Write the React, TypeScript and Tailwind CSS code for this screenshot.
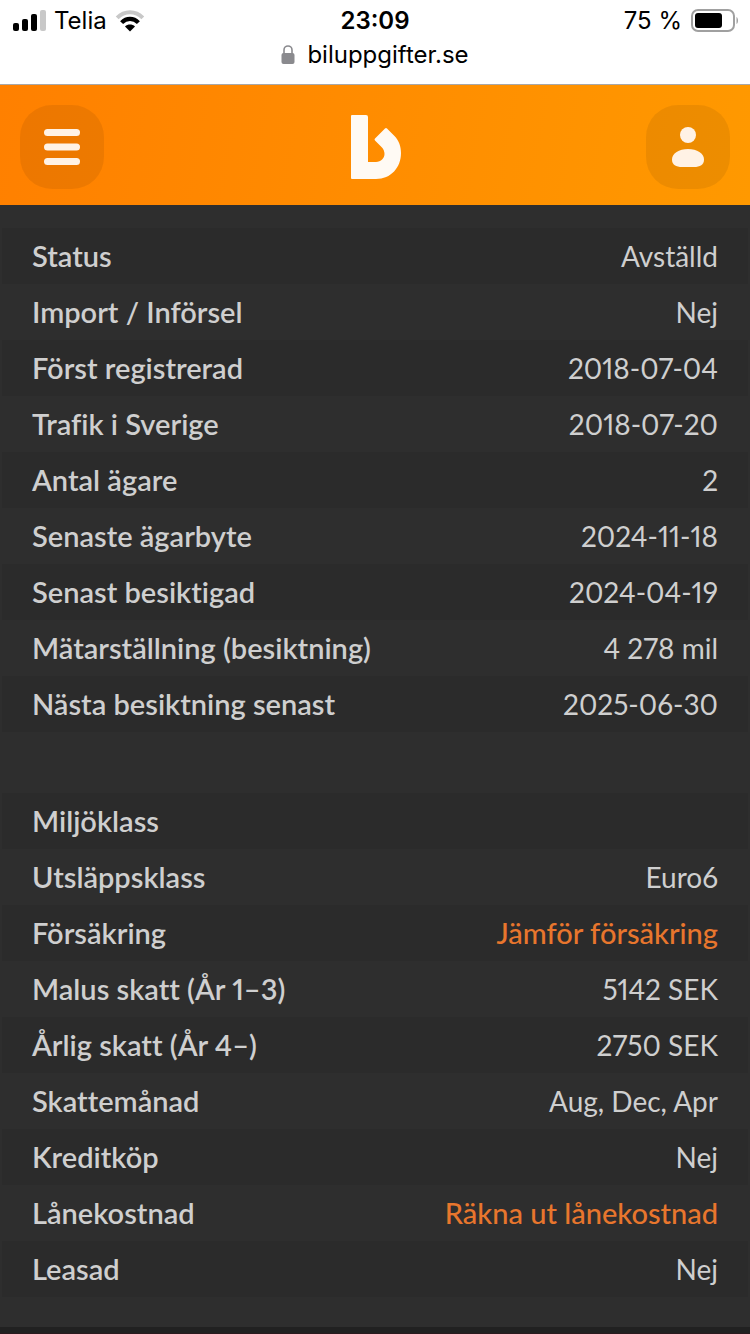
type Entry = {
  label: string
  value?: string
  href?: string
}

const status: Entry[] = [
  { label: "Status", value: "Avställd" },
  { label: "Import / Införsel", value: "Nej" },
  { label: "Först registrerad", value: "2018-07-04" },
  { label: "Trafik i Sverige", value: "2018-07-20" },
  { label: "Antal ägare", value: "2" },
  { label: "Senaste ägarbyte", value: "2024-11-18" },
  { label: "Senast besiktigad", value: "2024-04-19" },
  { label: "Mätarställning (besiktning)", value: "4 278 mil" },
  { label: "Nästa besiktning senast", value: "2025-06-30" },
]

const costs: Entry[] = [
  { label: "Miljöklass" },
  { label: "Utsläppsklass", value: "Euro6" },
  { label: "Försäkring", value: "Jämför försäkring", href: "#forsakring" },
  { label: "Malus skatt (År 1–3)", value: "5142 SEK" },
  { label: "Årlig skatt (År 4–)", value: "2750 SEK" },
  { label: "Skattemånad", value: "Aug, Dec, Apr" },
  { label: "Kreditköp", value: "Nej" },
  { label: "Lånekostnad", value: "Räkna ut lånekostnad", href: "#lanekostnad" },
  { label: "Leasad", value: "Nej" },
]

function StatusBar() {
  return (
    <div className="h-[85px] border-b border-[#a8a8a8] bg-white font-['Inter',sans-serif] text-2xl leading-8 text-black">
      <div className="grid grid-cols-3 items-center px-3 pt-[5px]">
        <div className="flex items-center gap-2">
          <svg width="34" height="22" viewBox="0 0 34 22" aria-hidden="true">
            <rect x="1" y="13" width="6" height="8" rx="2" />
            <rect x="10" y="9" width="6" height="12" rx="2" />
            <rect x="19" y="4" width="6" height="17" rx="2" />
            <rect x="28" y="0" width="6" height="21" rx="2" fill="#c8c8c8" />
          </svg>
          <span>Telia</span>
          <svg width="32" height="22" viewBox="0 0 32 22" fill="none" aria-hidden="true">
            <path d="M2.2 7.8C9.5 0.4 20.5 0.4 27.8 7.8" stroke="#c8c8c8" strokeWidth="4" />
            <path d="M6.6 12.6C11.5 7.6 18.5 7.6 23.4 12.6" stroke="#000" strokeWidth="4.2" />
            <path d="M10 16.4C12.8 13.8 17.2 13.8 20 16.4L15 21.4Z" fill="#000" />
          </svg>
        </div>
        <div className="text-center font-semibold">23:09</div>
        <div className="flex items-center justify-end gap-2">
          <span>75 %</span>
          <svg width="48" height="24" viewBox="0 0 48 24" aria-hidden="true">
            <rect x="2" y="1" width="42" height="21" rx="6" fill="none" stroke="#a0a0a0" strokeWidth="2" />
            <rect x="5" y="4" width="27" height="15" rx="3" />
            <path d="M46.5 8C48.5 9 48.5 14 46.5 15Z" fill="#a0a0a0" />
          </svg>
        </div>
      </div>
      <div className="flex items-center justify-center gap-3 pt-0.5">
        <svg width="14" height="20" viewBox="0 0 14 20" aria-hidden="true">
          <path d="M3 9V5a4 4 0 0 1 8 0v4" fill="none" stroke="#8a8a8e" strokeWidth="1.6" />
          <rect x="0.5" y="8" width="13" height="11" rx="2" fill="#8a8a8e" />
        </svg>
        <span>biluppgifter.se</span>
      </div>
    </div>
  )
}

function Header() {
  return (
    <header className="flex h-[120px] items-center justify-between bg-[linear-gradient(100deg,#ff8000,#ff9900)] px-5 pt-1">
      <button
        type="button"
        aria-label="Meny"
        className="flex size-[84px] items-center justify-center rounded-[32px] bg-black/7"
      >
        <svg width="36" height="36" viewBox="0 0 36 36" fill="#fff2e5">
          <rect width="36" height="7" rx="3.5" />
          <rect y="14.5" width="36" height="7" rx="3.5" />
          <rect y="29" width="36" height="7" rx="3.5" />
        </svg>
      </button>
      <a href="#start" aria-label="Biluppgifter">
        <svg width="52" height="64" viewBox="0 0 52 64" fill="#fffaf4">
          <path d="M3 0H17Q19 0 19 2V47H27C32 47 35.5 43 35.5 39C35.5 36.5 34.5 34 32.5 32L26 25.5Q25 24.5 26 23.5L36 13.5Q37 12.5 38 13.5L45.5 21C50 25.5 52 31.5 52 38C52 52.5 42 64 27 64H3Q2 64 2 63V1Q2 0 3 0Z" />
        </svg>
      </a>
      <button
        type="button"
        aria-label="Mitt konto"
        className="flex size-[84px] items-center justify-center rounded-[32px] bg-black/7"
      >
        <svg width="32" height="40" viewBox="0 0 32 40" fill="#fff2e5">
          <circle cx="16" cy="8" r="8" />
          <path d="M16 22C25 22 32 26.5 32 32.5C32 38 28 40 22 40H10C4 40 0 38 0 32.5C0 26.5 7 22 16 22Z" />
        </svg>
      </button>
    </header>
  )
}

function DataTable({ entries, name }: { entries: Entry[]; name: string }) {
  return (
    <table
      aria-label={name}
      className="w-full text-[28px] leading-8 text-[#cfcfcf] proportional-nums [font-variant-ligatures:none]"
    >
      <tbody>
        {entries.map((entry) => (
          <tr key={entry.label} className="h-14 odd:bg-[#2b2b2b]">
            <th scope="row" className="pl-[30px] text-left text-[29px] font-semibold">
              {entry.label}
            </th>
            <td className="pr-[30px] text-right">
              {entry.href ? (
                <a href={entry.href} className="text-[29px] font-medium text-[#e8762d]">
                  {entry.value}
                </a>
              ) : (
                entry.value
              )}
            </td>
          </tr>
        ))}
      </tbody>
    </table>
  )
}

export default function App() {
  return (
    <div className="min-h-screen bg-[#2e2e2e]">
      <StatusBar />
      <Header />
      <main className="px-0.5 pt-[23px] pb-[30px] font-['Lato',sans-serif]">
        <DataTable entries={status} name="Status" />
        <div className="mt-[61px]">
          <DataTable entries={costs} name="Miljö och skatt" />
        </div>
      </main>
      <footer className="h-[7px] border-b border-[#2a1a1e] bg-[#212121]" />
    </div>
  )
}
